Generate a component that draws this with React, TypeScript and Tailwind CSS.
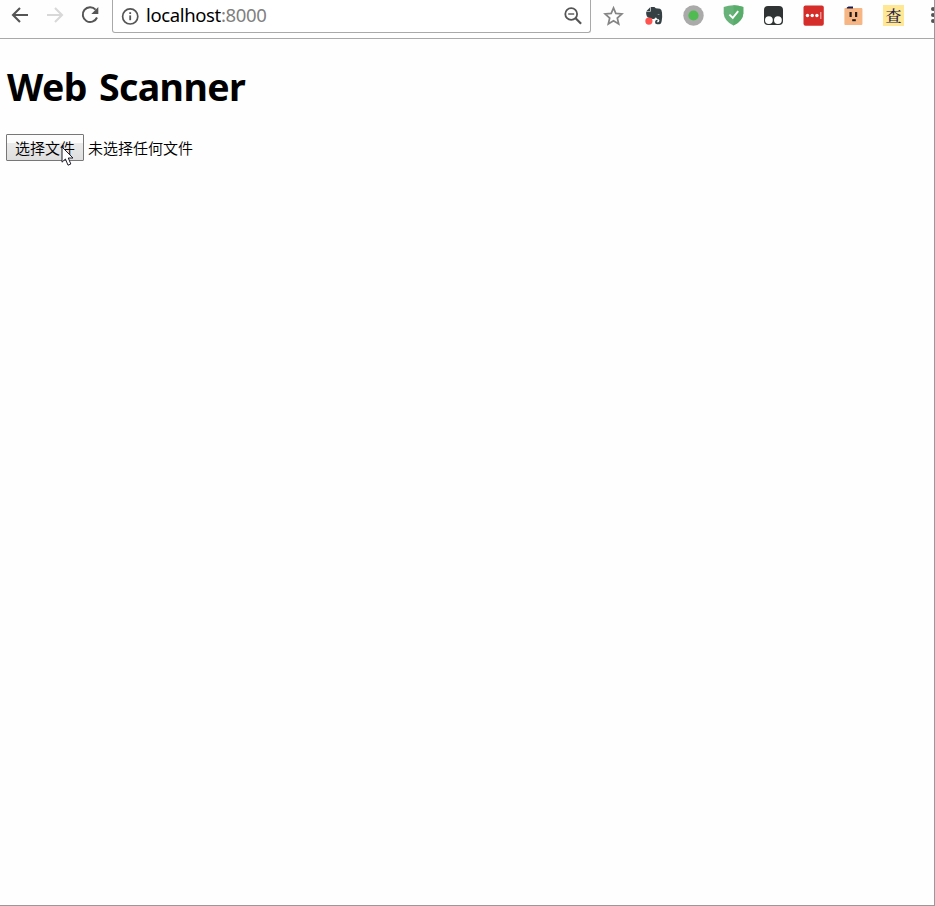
import React from "react";

function Slot({ children }: { children: React.ReactNode }) {
  return <div className="flex h-[30px] w-10 shrink-0 items-center justify-center">{children}</div>;
}

function Icon({ children, size = 22 }: { children: React.ReactNode; size?: number }) {
  return (
    <svg width={size} height={size} viewBox="0 0 22 22" fill="none" className="shrink-0">
      {children}
    </svg>
  );
}

function Navigation() {
  return (
    <div className="flex h-[30px] w-28 shrink-0 items-center gap-[13px] pl-[9px]">
      <Icon>
        <path d="M19 11H4M11 4L4 11L11 18" stroke="#555" strokeWidth="2.1" />
      </Icon>
      <Icon>
        <path d="M3 11H18M11 4L18 11L11 18" stroke="#d8d8d8" strokeWidth="2.1" />
      </Icon>
      <Icon>
        <path d="M16.6 5.6A7.4 7.4 0 1 0 18 13.5" stroke="#555" strokeWidth="2" />
        <path d="M19.3 3V10H12.3Z" fill="#555" />
      </Icon>
    </div>
  );
}

function AddressBar() {
  return (
    <div className="flex h-[33px] w-[479px] shrink-0 items-center rounded-b-[3px] border border-t-0 border-[#a9a9a9] bg-white pl-[6px] pr-[6px]">
      <Icon>
        <circle cx="11.2" cy="11.4" r="7.6" stroke="#555" strokeWidth="1.7" />
        <path d="M11.2 10.4V15.2" stroke="#555" strokeWidth="1.8" />
        <path d="M11.2 7.2V9" stroke="#555" strokeWidth="1.8" />
      </Icon>
      <span className="ml-[5px] -mt-[2px] flex-1 font-['Noto_Sans','Open_Sans',sans-serif] text-[18.5px] leading-[26px] tracking-[-0.36px] text-black">
        localhost<span className="text-[#808080]">:8000</span>
      </span>
      <Icon>
        <circle cx="9.2" cy="9" r="5.9" stroke="#555" strokeWidth="1.8" />
        <path d="M6.2 9H12.2" stroke="#555" strokeWidth="1.4" />
        <path d="M13.6 13.3L19.1 18.8" stroke="#555" strokeWidth="2.2" />
      </Icon>
    </div>
  );
}

function Extensions() {
  return (
    <div className="ml-[3px] flex h-[30px] shrink-0">
      <Slot>
        <Icon>
          <path d="M10.5 3.9L12.8 9.4L18.9 10L14.3 14L15.7 20L10.5 16.8L5.3 20L6.7 14L2.1 10L8.2 9.4Z" stroke="#858585" strokeWidth="1.7" />
        </Icon>
      </Slot>
      <Slot>
        <Icon>
          <g transform="translate(0 .7)">
            <path d="M7.2 2.6V6.5H3.3Z" fill="#344044" />
            <path d="M7.8 2.3H11.4L12.8 3.5L17 4.1Q18.7 4.6 19 7.8Q19.5 12.3 18.7 16.3Q18.1 19.5 16.3 19.5H14.2Q12 19.4 12 17.2Q12.2 15 14.6 14.9V16.5Q13.6 16.5 13.8 17.2Q14 17.8 15.3 17.6Q16.4 17.3 16.4 15.6Q16 14.4 14 14L12.9 12.6Q11.8 14.6 9.9 14.2Q5.2 13.6 3.8 11.6Q2.9 10 3.2 7.1H7Q7.8 7.1 7.8 6.3Z" fill="#344044" />
            <path d="M14.3 10Q15.5 8.4 16.8 10.3Z" fill="#9da5a7" />
            <circle cx="5.9" cy="16.4" r="3.6" fill="#ff5350" />
          </g>
        </Icon>
      </Slot>
      <Slot>
        <Icon>
          <circle cx="10.5" cy="11.5" r="10.2" fill="#aaa" />
          <circle cx="10.5" cy="11.5" r="5.1" fill="#4fbb50" />
        </Icon>
      </Slot>
      <Slot>
        <Icon>
          <path d="M10.5 1.2Q15.5 1.3 20.3 2.9V9.4Q19.9 16.7 10.5 21.6Q1.1 16.7 .7 9.4V2.9Q5.5 1.3 10.5 1.2Z" fill="#67b279" />
          <path d="M10.5 1.2Q15.5 1.3 20.3 2.9V9.4Q19.9 16.7 10.5 21.6Z" fill="#58ad6a" />
          <path d="M6.4 10.6L9.8 13.9L15.2 7.1" stroke="#fff" strokeWidth="1.9" />
        </Icon>
      </Slot>
      <Slot>
        <Icon>
          <rect x="1" y="2" width="19" height="19" rx="4" fill="#303333" />
          <circle cx="5.9" cy="16.1" r="3.9" fill="#fff" />
          <circle cx="14.9" cy="16.1" r="3.9" fill="#fff" />
        </Icon>
      </Slot>
      <Slot>
        <Icon>
          <rect x=".5" y="1.5" width="20.3" height="20.2" rx="2" fill="#d52d29" />
          <circle cx="4.5" cy="11.5" r="1.7" fill="#fff" />
          <circle cx="9.2" cy="11.5" r="1.7" fill="#fff" />
          <circle cx="13.9" cy="11.5" r="1.7" fill="#fff" />
          <path d="M17.8 7.9V15.1" stroke="#eaa" strokeWidth="1.2" />
        </Icon>
      </Slot>
      <Slot>
        <Icon>
          <rect x="1.4" y="4" width="18" height="17" rx="1" fill="#f6b582" />
          <path d="M3.8 4.5V3.5L5.5 2.5H10V4.5Z" fill="#17184d" />
          <rect x="6.5" y="8" width="2.2" height="5" fill="#201d1b" />
          <rect x="12" y="8" width="2.2" height="5" fill="#201d1b" />
          <rect x="9.2" y="15.2" width="3.6" height="2" fill="#201d1b" />
        </Icon>
      </Slot>
      <Slot>
        <div className="mr-[1px] mt-[1px] flex h-[21px] w-[21px] items-center justify-center bg-[#ffe794] font-['Noto_Serif_CJK_SC','Noto_Sans_CJK_SC',serif] text-[16px] font-medium leading-[20px] text-[#24204c]">
          查
        </div>
      </Slot>
    </div>
  );
}

function Toolbar() {
  return (
    <header className="flex h-[39px] shrink-0 items-start overflow-hidden border-b border-[#a9a9a9] bg-[#fefefe]">
      <Navigation />
      <AddressBar />
      <Extensions />
      <div className="ml-auto mt-[7px] flex w-[3px] shrink-0 flex-col gap-[2px]">
        <span className="h-1 w-1 rounded-full bg-[#555]" />
        <span className="h-1 w-1 rounded-full bg-[#555]" />
        <span className="h-1 w-1 rounded-full bg-[#555]" />
      </div>
    </header>
  );
}

export default function App() {
  return (
    <div className="flex h-[906px] w-[935px] flex-col overflow-hidden border-b border-r border-[#999] bg-[#fefefe]">
      <Toolbar />
      <main className="pl-[6px] pt-[22px] text-black">
        <h1 className="pl-px font-['Noto_Sans','Open_Sans',sans-serif] text-[37.5px] font-bold leading-[52px] tracking-[-0.6px] [word-spacing:3px]">Web Scanner</h1>
        <div className="mt-[21px] flex items-center font-['Noto_Sans_CJK_SC',sans-serif] text-[15px] font-[350] leading-[22px]">
          <button className="relative h-[27px] w-[78px] rounded-[1px] border border-[#777] bg-linear-to-b from-[#fcfcfc] from-30% via-[#ebebeb] via-30% to-[#dedede] leading-[24px]">
            选择文件
            <svg width="13" height="21" viewBox="0 0 13 21" className="absolute left-[54px] top-[11px]">
              <path d="M1 1V16.2L4.4 13L7 19.2L9.8 18L7.3 12H12Z" fill="#fff" stroke="#1c1c2a" strokeWidth="1" />
            </svg>
          </button>
          <span className="ml-1">未选择任何文件</span>
        </div>
      </main>
    </div>
  );
}
